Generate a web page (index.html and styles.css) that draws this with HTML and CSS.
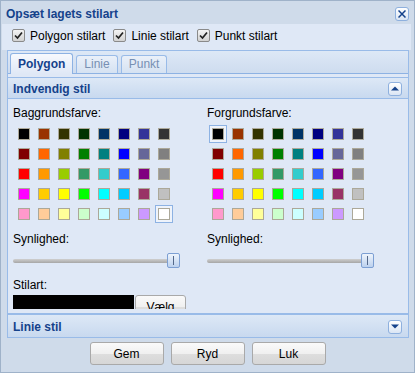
FILE: index.html
```html
<!DOCTYPE html>
<html lang="da">
<head>
    <meta charset="UTF-8">
    <meta name="viewport" content="width=device-width, initial-scale=1.0">
    <title>Opsæt lagets stilart</title>
    <link rel="stylesheet" href="styles.css">
</head>
<body>
    <div class="window">
        <div class="win-header">
            <span class="win-title">Opsæt lagets stilart</span>
            <span class="tool">
                <svg width="8" height="8" viewBox="0 0 8 8"><path d="M0.5 0.5L7.5 7.5M7.5 0.5L0.5 7.5" stroke="#15428b" stroke-width="1.5"/></svg>
            </span>
        </div>

        <div class="check-row">
            <label class="check">
                <span class="check-box"><svg width="11" height="11" viewBox="0 0 11 11"><path d="M2 5.5L4.5 8L9 2.5" fill="none" stroke="#222" stroke-width="1.7"/></svg></span>
                Polygon stilart
            </label>
            <label class="check">
                <span class="check-box"><svg width="11" height="11" viewBox="0 0 11 11"><path d="M2 5.5L4.5 8L9 2.5" fill="none" stroke="#222" stroke-width="1.7"/></svg></span>
                Linie stilart
            </label>
            <label class="check">
                <span class="check-box"><svg width="11" height="11" viewBox="0 0 11 11"><path d="M2 5.5L4.5 8L9 2.5" fill="none" stroke="#222" stroke-width="1.7"/></svg></span>
                Punkt stilart
            </label>
        </div>

        <div class="tab-panel">
            <div class="tab-strip">
                <span class="tab active">Polygon</span>
                <span class="tab">Linie</span>
                <span class="tab">Punkt</span>
            </div>
            <div class="tab-spacer"></div>

            <div class="panel-header">
                <span>Indvendig stil</span>
                <span class="tool">
                    <svg width="8" height="5" viewBox="0 0 8 5"><path d="M0 4.5L4 0.5L8 4.5z" fill="#15428b"/></svg>
                </span>
            </div>
            <div class="panel-body">
                <div class="panel-content">
                    <div class="col">
                        <div class="field-label">Baggrundsfarve:</div>
                        <div class="palette" data-selected="FFFFFF"></div>
                        <div class="field-label after-palette">Synlighed:</div>
                        <div class="slider">
                            <div class="slider-track"></div>
                            <div class="slider-thumb"><span></span></div>
                        </div>
                        <div class="field-label after-slider">Stilart:</div>
                        <div class="pattern-row">
                            <div class="pattern"></div>
                            <button class="btn small">Vælg</button>
                        </div>
                    </div>
                    <div class="col">
                        <div class="field-label">Forgrundsfarve:</div>
                        <div class="palette" data-selected="000000"></div>
                        <div class="field-label after-palette">Synlighed:</div>
                        <div class="slider">
                            <div class="slider-track"></div>
                            <div class="slider-thumb"><span></span></div>
                        </div>
                    </div>
                </div>
            </div>

            <div class="panel-header collapsed">
                <span>Linie stil</span>
                <span class="tool">
                    <svg width="8" height="5" viewBox="0 0 8 5"><path d="M0 0.5L4 4.5L8 0.5z" fill="#15428b"/></svg>
                </span>
            </div>
        </div>

        <div class="win-footer">
            <button class="btn">Gem</button>
            <button class="btn">Ryd</button>
            <button class="btn">Luk</button>
        </div>
    </div>

    <script>
        // ExtJS default color palette
        const colors = [
            '000000', '993300', '333300', '003300', '003366', '000080', '333399', '333333',
            '800000', 'FF6600', '808000', '008000', '008080', '0000FF', '666699', '808080',
            'FF0000', 'FF9900', '99CC00', '339966', '33CCCC', '3366FF', '800080', '969696',
            'FF00FF', 'FFCC00', 'FFFF00', '00FF00', '00FFFF', '00CCFF', '993366', 'C0C0C0',
            'FF99CC', 'FFCC99', 'FFFF99', 'CCFFCC', 'CCFFFF', '99CCFF', 'CC99FF', 'FFFFFF'
        ];

        document.querySelectorAll('.palette').forEach(palette => {
            colors.forEach(color => {
                const cell = document.createElement('a');
                cell.className = 'swatch' + (color === palette.dataset.selected ? ' selected' : '');
                const em = document.createElement('em');
                em.style.background = '#' + color;
                cell.appendChild(em);
                palette.appendChild(cell);
            });
        });
    </script>
</body>
</html>
```

FILE: styles.css
```css
body {
    margin: 0;
    background: #ffffff;
    font-family: "Liberation Sans", Arial, sans-serif;
    font-size: 12px;
    color: #000;
}
.window {
    box-sizing: border-box;
    width: 415px;
    height: 373px;
    border: 1px solid #9fb2c9;
    background: #cfdbea;
    display: flex;
    flex-direction: column;
}
.win-header {
    box-sizing: border-box;
    height: 23px;
    padding: 2px 5px 0 5px;
    display: flex;
    align-items: center;
    justify-content: space-between;
}
.win-title {
    font-weight: bold;
    color: #15428b;
}
.tool {
    box-sizing: border-box;
    width: 14px;
    height: 14px;
    border: 1px solid #8eb0de;
    border-radius: 3px;
    background: linear-gradient(#ffffff, #dae5f4);
    display: flex;
    align-items: center;
    justify-content: center;
}

/* checkbox row */
.check-row {
    box-sizing: border-box;
    height: 26px;
    margin: 0 3px 0 1px;
    padding: 0 0 3px 10px;
    background: #dfe8f6;
    display: flex;
    align-items: center;
}
.check {
    display: flex;
    align-items: center;
    margin-right: 8px;
}
.check-box {
    box-sizing: border-box;
    width: 13px;
    height: 13px;
    margin-right: 5px;
    border: 1px solid #8a8a8a;
    border-radius: 2px;
    background: linear-gradient(#f4f4f4, #d2d2d2);
    display: flex;
    align-items: center;
    justify-content: center;
}

/* tabs */
.tab-panel {
    margin: 0 5px 0 6px;
    border: 1px solid #99bbe8;
    background: #dfe8f6;
}
.tab-strip {
    box-sizing: border-box;
    height: 23px;
    padding-left: 2px;
    border-bottom: 1px solid #8db2e3;
    background: linear-gradient(#dde8f6, #cedcef);
    display: flex;
    align-items: flex-end;
}
.tab {
    box-sizing: border-box;
    height: 18px;
    padding: 1px 7px 0;
    margin-right: 3px;
    line-height: 14px;
    border: 1px solid #99bbe8;
    border-bottom: none;
    border-radius: 3px 3px 0 0;
    background: linear-gradient(#eaf0f9, #d5e2f2);
    color: #7790b3;
}
.tab.active {
    height: 21px;
    padding-top: 3px;
    margin-bottom: -1px;
    border-color: #8db2e3;
    background: linear-gradient(#f7f9fd, #dfe8f6);
    color: #15428b;
    font-weight: bold;
}
.tab-spacer {
    height: 3px;
    background: #dfe8f6;
}

/* collapsible panels */
.panel-header {
    box-sizing: border-box;
    height: 22px;
    padding: 1px 6px 0 5px;
    border-top: 1px solid #99bbe8;
    border-bottom: 1px solid #99bbe8;
    background: linear-gradient(#dde8f6, #c8d9ef);
    color: #15428b;
    font-weight: bold;
    display: flex;
    align-items: center;
    justify-content: space-between;
}
.panel-header.collapsed {
    height: 23px;
    border-bottom: none;
}
.panel-body {
    box-sizing: border-box;
    height: 215px;
    padding-bottom: 4px;
    border-bottom: 1px solid #99bbe8;
}
.panel-content {
    box-sizing: border-box;
    height: 100%;
    padding: 7px 0 0 5px;
    overflow: hidden;
    display: flex;
}
.col {
    width: 194px;
}
.field-label {
    line-height: 14px;
}
.field-label.after-palette {
    margin-top: 9px;
}
.field-label.after-slider {
    margin-top: 10px;
}

/* color palette */
.palette {
    margin: 5px 0 0 2px;
    display: grid;
    grid-template-columns: repeat(8, 18px);
    gap: 2px;
}
.swatch {
    box-sizing: border-box;
    width: 18px;
    height: 18px;
    padding: 2px;
    border: 1px solid transparent;
}
.swatch.selected {
    border-color: #8db2e3;
    background: #eef3fb;
}
.swatch em {
    display: block;
    box-sizing: border-box;
    width: 12px;
    height: 12px;
    border: 1px solid #aca899;
}

/* slider */
.slider {
    width: 167px;
    height: 15px;
    margin-top: 7px;
    display: flex;
    align-items: center;
}
.slider-track {
    flex: 1;
    height: 4px;
    margin-right: -3px;
    border-radius: 2px;
    background: linear-gradient(#cfcfcf, #a6a6a6);
}
.slider-thumb {
    box-sizing: border-box;
    position: relative;
    width: 13px;
    height: 15px;
    border: 1px solid #7c9fd3;
    border-radius: 2px;
    background: linear-gradient(#eef4fc, #bcd1ee);
    display: flex;
    align-items: center;
    justify-content: center;
}
.slider-thumb span {
    width: 1px;
    height: 9px;
    background: #53688a;
}

/* pattern */
.pattern-row {
    margin-top: 3px;
    display: flex;
    gap: 1px;
}
.pattern {
    width: 121px;
    height: 20px;
    background: #000;
}

/* buttons */
.btn {
    box-sizing: border-box;
    width: 74px;
    height: 23px;
    padding: 0;
    border: 1px solid #a9a9a9;
    border-radius: 3px;
    background: linear-gradient(#fafafa 0%, #f0f0f0 50%, #dedede 51%, #d6d6d6 100%);
    font-family: "Liberation Sans", Arial, sans-serif;
    font-size: 12px;
    color: #000;
}
.btn.small {
    width: 51px;
    flex: none;
}
.win-footer {
    flex: 1;
    padding-top: 4px;
    display: flex;
    justify-content: center;
    gap: 7px;
}
```
